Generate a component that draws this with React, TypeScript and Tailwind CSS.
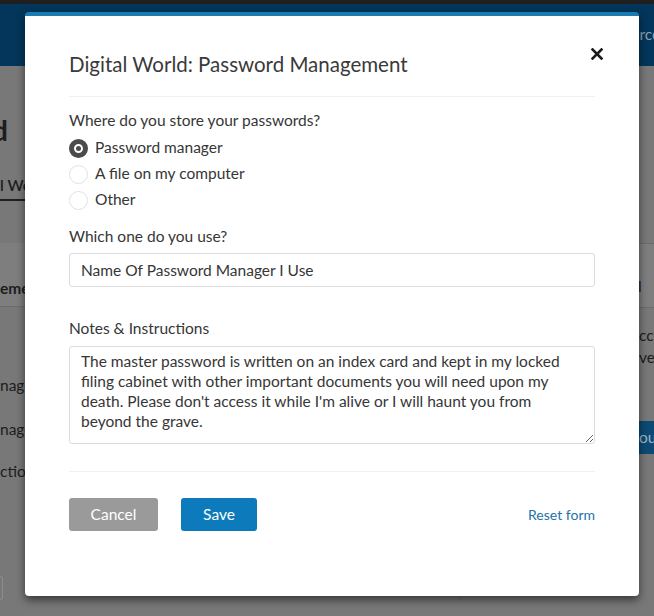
import React from "react";

// Text that starts off the left edge of its container: `lead` runs leftwards
// from the edge, `rest` continues to the right of it.
function EdgeText({ lead, rest, className = "" }: { lead: string; rest: string; className?: string }) {
  return (
    <div className={"flex whitespace-nowrap " + className}>
      <div className="w-0 flex justify-end">
        <span>{lead}</span>
      </div>
      <span>{rest}</span>
    </div>
  );
}

function Radio({ checked, label }: { checked?: boolean; label: string }) {
  return (
    <label className="flex h-[26px] items-center gap-[7px]">
      {checked ? (
        <span className="flex h-[19px] w-[19px] items-center justify-center rounded-full border-[5px] border-[#4b4b4b]">
          <span className="h-[5px] w-[5px] rounded-full bg-[#4b4b4b]" />
        </span>
      ) : (
        <span className="h-[19px] w-[19px] rounded-full border border-[#e2e2e2]" />
      )}
      <span>{label}</span>
    </label>
  );
}

export default function App() {
  return (
    <div className="relative h-[616px] w-[654px] overflow-hidden bg-[#787878] font-['Lato',sans-serif] text-[15.5px]">
      {/* page behind the dialog, dimmed */}
      <div className="h-[4px] bg-[#1f1f1f]" />
      <header className="flex h-[62px] items-center bg-[#03365a] pl-[598px] text-[#8d9eab]">
        <span className="whitespace-nowrap">Resources</span>
      </header>

      <div className="flex">
        <main className="w-[460px] shrink-0 border-r border-[#6c6c6c] text-[#1d1d1d]">
          <div className="flex justify-start pt-[47px]">
            <div className="flex w-[8px] justify-end">
              <h1 className="whitespace-nowrap text-[28px] font-bold leading-[34px]">Your Digital World</h1>
            </div>
          </div>
          <div className="mt-[28px] w-[26px] border-b-2 border-[#1f1f1f] pb-[4px] font-semibold leading-[20px]">
            <EdgeText lead="Digita" rest="l World" />
          </div>
          <section className="mt-[42px]">
            <div className="h-[64px] border-b border-[#6c6c6c] bg-[#7e7e7e] pt-[35px] font-bold leading-[20px]">
              <EdgeText lead="Manag" rest="ement" />
            </div>
            <div className="mt-[68px] flex flex-col gap-[24px] leading-[20px]">
              <EdgeText lead="Password Ma" rest="nager" />
              <EdgeText lead="Password Ma" rest="nager" />
              <EdgeText lead="Instru" rest="ctions" className="-mt-[2px]" />
            </div>
            <div className="mt-[95px] h-[24px] w-[3px] rounded-r-[3px] border border-l-0 border-[#8c8c8c]" />
          </section>
        </main>

        <aside className="flex-1 text-[#1d1d1d]">
          <div className="mt-[177px] h-[65px] border-y border-[#6c6c6c] bg-[#7e7e7e] pl-[178px] pt-[32px] leading-[20px]">
            <EdgeText lead="Too" rest="l" />
          </div>
          <div className="mt-[16px] pl-[179px] leading-[22px]">
            <EdgeText lead="A" rest="ccount" />
            <EdgeText lead="Sa" rest="ved" />
          </div>
          <div className="ml-[150px] mt-[53px] flex h-[33px] items-center rounded-[3px] bg-[#0b4a72] pl-[29px] text-[#9fb3c2]">
            <EdgeText lead="Y" rest="ours" />
          </div>
        </aside>
      </div>

      {/* dialog */}
      <div className="absolute left-[25px] top-[12px] flex h-[584px] w-[614px] flex-col rounded-[4px] border-t-4 border-[#1c7bb1] bg-white px-[44px] pt-[34px] text-[#363636] shadow-[0_4px_8px_rgba(0,0,0,0.55)]">
        <div className="flex items-start justify-between">
          <h2 className="text-[20.5px] leading-[28px] text-[#3a3a3a]">Digital World: Password Management</h2>
          <button className="-mr-[8px] -mt-[2px] text-[#1b1b1b]" aria-label="Close">
            <svg width="12" height="12" viewBox="0 0 12 12">
              <path d="M1.5 1.5 L10.5 10.5 M10.5 1.5 L1.5 10.5" stroke="currentColor" strokeWidth="2.6" strokeLinecap="square" />
            </svg>
          </button>
        </div>
        <div className="mt-[18px] border-b border-[#efefef]" />

        <p className="mt-[13px] leading-[20px]">Where do you store your passwords?</p>
        <div className="mt-[5px] flex flex-col">
          <Radio checked label="Password manager" />
          <Radio label="A file on my computer" />
          <Radio label="Other" />
        </div>

        <p className="mt-[13px] leading-[20px]">Which one do you use?</p>
        <input
          className="mt-[7px] h-[34px] w-full rounded-[3px] border border-[#dcdcdc] px-[11px] text-[15.5px] text-[#363636] outline-none"
          defaultValue="Name Of Password Manager I Use"
        />

        <p className="mt-[31px] leading-[20px]">Notes &amp; Instructions</p>
        <textarea
          className="mt-[8px] h-[98px] w-full rounded-[3px] border border-[#dcdcdc] px-[11px] py-[4px] text-[15.5px] leading-[20px] text-[#363636] outline-none"
          defaultValue="The master password is written on an index card and kept in my locked filing cabinet with other important documents you will need upon my death. Please don't access it while I'm alive or I will haunt you from beyond the grave."
        />

        <div className="mt-[27px] border-b border-[#f0f0f0]" />

        <div className="mt-[26px] flex items-center">
          <button className="h-[33px] w-[89px] rounded-[3px] bg-[#9a9a9a] text-white">Cancel</button>
          <button className="ml-[23px] h-[33px] w-[76px] rounded-[3px] bg-[#0c7abb] text-white">Save</button>
          <a className="ml-auto text-[14px] text-[#1f72a6]" href="#">Reset form</a>
        </div>
      </div>
    </div>
  );
}
